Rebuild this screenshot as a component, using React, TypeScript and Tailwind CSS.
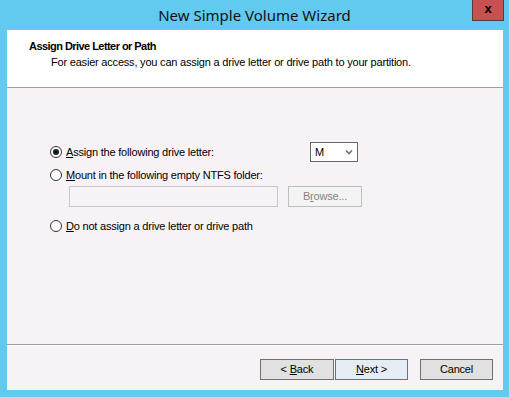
import React from "react";

const font = { fontFamily: '"Liberation Sans", Arial, sans-serif' };

function Radio({ checked }: { checked?: boolean }) {
  return (
    <span className="flex h-[12px] w-[12px] shrink-0 items-center justify-center rounded-full border border-[#333333] bg-white">
      {checked && <span className="h-[6px] w-[6px] rounded-full bg-[#1a1a1a]" />}
    </span>
  );
}

function Btn({ children, primary, disabled, w = "w-[74px]" }: { children: React.ReactNode; primary?: boolean; disabled?: boolean; w?: string }) {
  return (
    <div
      className={
        "flex h-[21px] items-center justify-center border text-[11px] tracking-[-0.2px] " +
        w +
        " " +
        (disabled
          ? "border-[#bfbfbf] bg-[#f4f4f4] text-[#838383]"
          : primary
          ? "border-[#3c7fb1] bg-[#e5ecf2] text-black"
          : "border-[#707070] bg-[#e1e1e1] text-black")
      }
    >
      {children}
    </div>
  );
}

export default function App() {
  return (
    <div className="relative flex h-[397px] w-[509px] flex-col bg-[#62c9ef]" style={font}>
      <div className="flex h-[30px] items-center justify-center pt-[1px] text-[15px] text-[#111]" style={{ fontFamily: '"Noto Sans", "Open Sans", sans-serif' }}>
        New Simple Volume Wizard
      </div>
      <div className="absolute right-[5px] top-0 flex h-[21px] w-[32px] items-center justify-center border border-t-0 border-[#5a3a3a] bg-[#c75050] pb-[2px] text-[13px] font-bold text-black">
        x
      </div>
      <div className="mx-[6px] ml-[7px] flex h-[360px] flex-col bg-[#f6f2f6]">
        <div className="h-[58px] border-b border-[#a0a0a0] bg-white pl-[22px] pt-[10px] text-[11px] leading-[13px] text-black">
          <div className="font-bold tracking-[-0.55px]">Assign Drive Letter or Path</div>
          <div className="mt-[3px] pl-[22px] tracking-[-0.2px]">For easier access, you can assign a drive letter or drive path to your partition.</div>
        </div>
        <div className="flex flex-1 flex-col pl-[43px] pt-[54px] text-[11px] tracking-[-0.2px] text-black">
          <div className="flex h-[20px] items-center">
            <Radio checked />
            <span className="ml-[4px] w-[244px]">
              <u>A</u>ssign the following drive letter:
            </span>
            <div className="flex h-[20px] w-[48px] items-center justify-between border border-[#666] bg-white pl-[4px] pr-[4px]">
              <span>M</span>
              <svg width="8" height="6" viewBox="0 0 8 6">
                <path d="M1 1.5 L4 4.5 L7 1.5" stroke="#707070" strokeWidth="1.6" fill="none" />
              </svg>
            </div>
          </div>
          <div className="mt-[6px] flex h-[14px] items-center">
            <Radio />
            <span className="ml-[4px]">
              <u>M</u>ount in the following empty NTFS folder:
            </span>
          </div>
          <div className="mt-[4px] flex items-center pl-[19px]">
            <div className="h-[21px] w-[209px] border border-[#c8c8c8] bg-[#f6f2f6]" />
            <div className="ml-[10px]">
              <Btn disabled>
                <span>
                  B<u>r</u>owse...
                </span>
              </Btn>
            </div>
          </div>
          <div className="mt-[12px] flex h-[14px] items-center">
            <Radio />
            <span className="ml-[4px]">
              <u>D</u>o not assign a drive letter or drive path
            </span>
          </div>
        </div>
        <div className="h-[46px] border-t border-[#a0a0a0]">
          <div className="flex h-full items-start border-t border-white pl-[253px] pt-[13px]">
            <Btn>
              <span>
                &lt; <u>B</u>ack
              </span>
            </Btn>
            <div className="ml-[1px]">
              <Btn primary w="w-[73px]">
                <span>
                  <u>N</u>ext &gt;
                </span>
              </Btn>
            </div>
            <div className="ml-[12px]">
              <Btn w="w-[73px]">Cancel</Btn>
            </div>
          </div>
        </div>
      </div>
    </div>
  );
}
